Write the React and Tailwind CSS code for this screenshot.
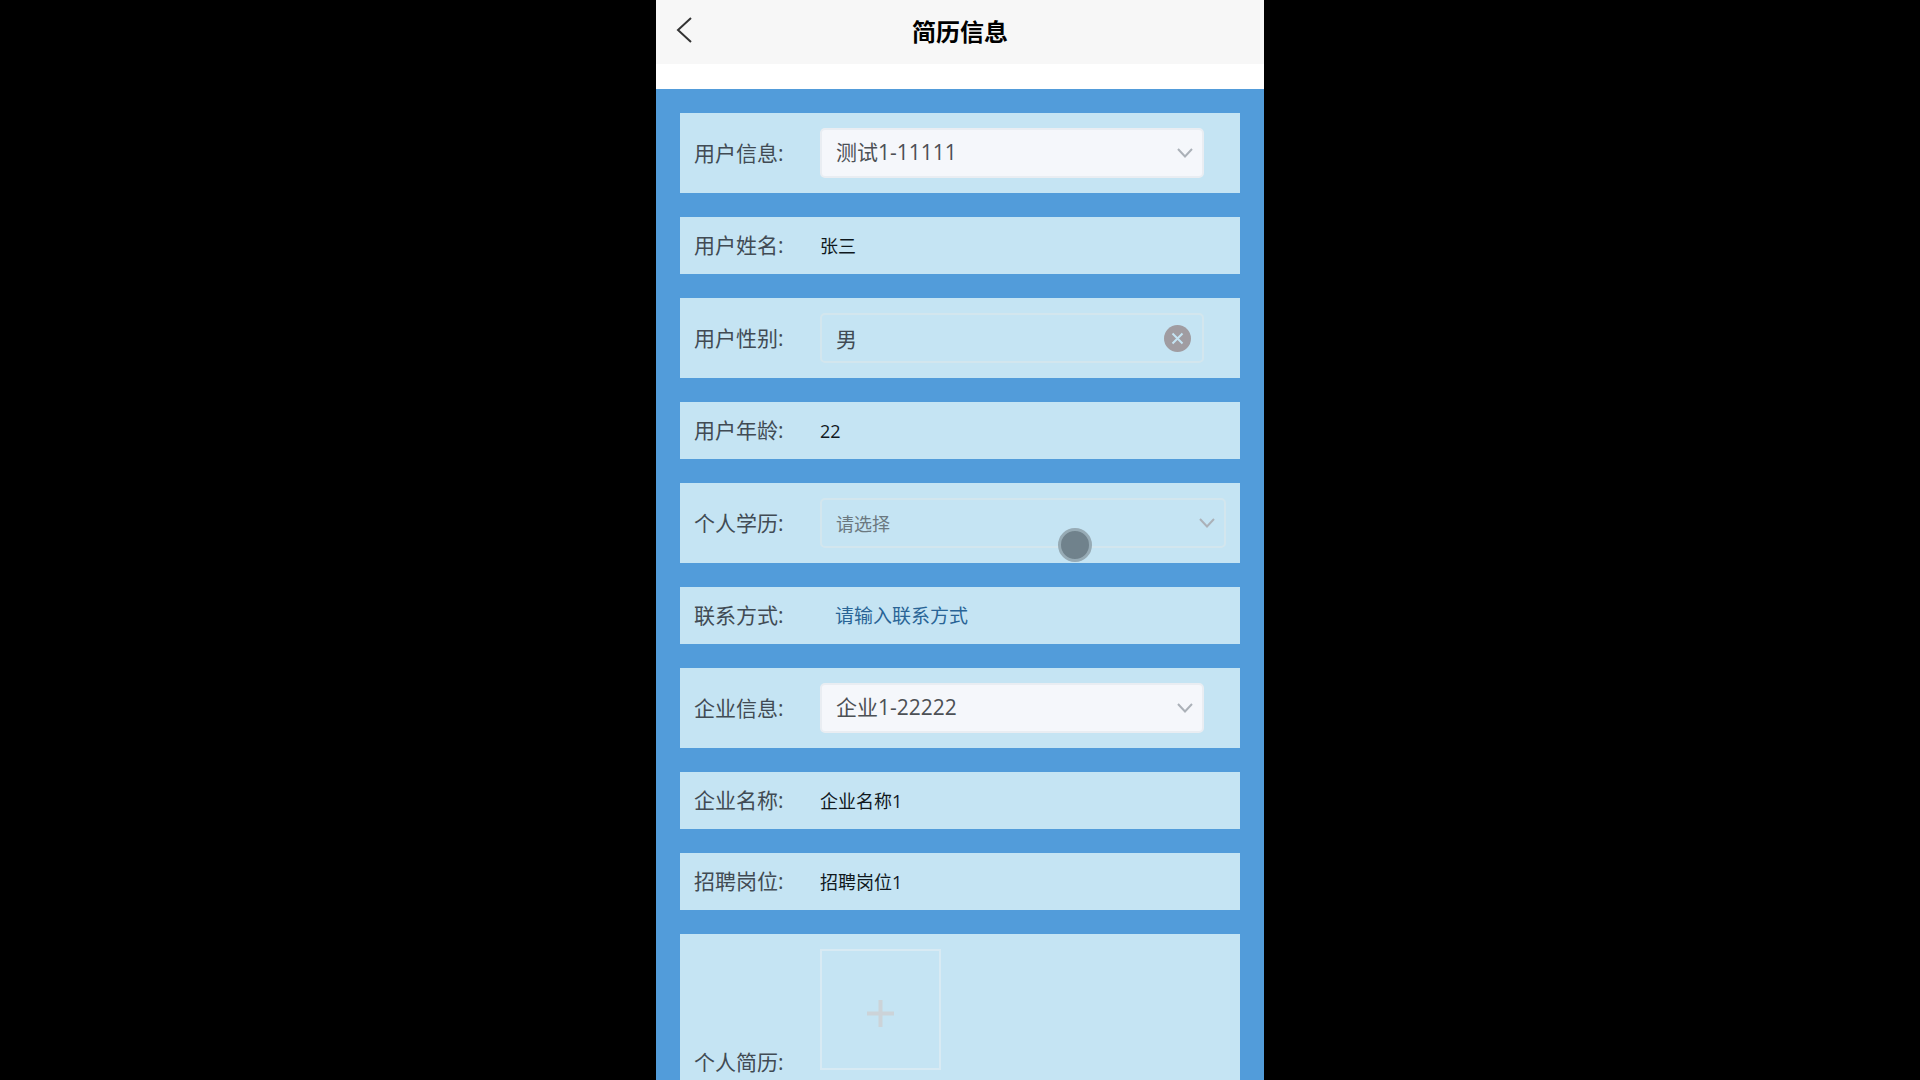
import { useState } from 'react';
import { clsx } from 'clsx';

const fieldBox = 'relative flex h-[50px] flex-1 items-center rounded-[5px] border-2';

function Row({ id, label, children, alignEnd }) {
  return (
    <div className={clsx('flex bg-[#c5e4f3] px-[14px] py-[15px]', alignEnd ? 'items-end' : 'items-center')}>
      <label htmlFor={id} className="w-[126px] shrink-0 text-[21px] leading-[27px] text-[#414b54]">
        {label}:
      </label>
      {children}
    </div>
  );
}

function Chevron() {
  return (
    <svg
      viewBox="0 0 16 10"
      className="pointer-events-none absolute right-[9px] h-[10px] w-4 fill-none stroke-[#abb1b8] stroke-2"
    >
      <path d="M1 1l7 7.5L15 1" />
    </svg>
  );
}

function SelectField({ id, options, disabled, full }) {
  return (
    <div
      className={clsx(
        fieldBox,
        disabled ? 'border-[#e9edf2] bg-[#f5f7fb]' : 'border-[#d3e6ee]',
        !full && 'mr-[22px]'
      )}
    >
      <select
        id={id}
        disabled={disabled}
        className={clsx(
          'h-full w-full appearance-none bg-transparent px-[14px] opacity-100 outline-none',
          disabled ? 'text-[21px] text-[#4c5055]' : 'pt-[2px] text-[18px] text-[#6b7880]'
        )}
      >
        {options.map((o) => (
          <option key={o}>{o}</option>
        ))}
      </select>
      <Chevron />
    </div>
  );
}

function TextField({ id, value }) {
  return (
    <input
      id={id}
      defaultValue={value}
      className="h-[27px] min-w-0 flex-1 bg-transparent pt-[2px] text-[18px] text-[#10181d] outline-none"
    />
  );
}

function GenderField() {
  const [gender, setGender] = useState('男');

  return (
    <div className={clsx(fieldBox, 'mr-[22px] border-[#d3e6ee]')}>
      <input
        id="gender"
        value={gender}
        onChange={(e) => setGender(e.target.value)}
        className="h-full min-w-0 flex-1 bg-transparent px-[14px] text-[21px] text-[#414b54] outline-none"
      />
      {gender && (
        <button type="button" aria-label="清除" className="mr-[11px]" onClick={() => setGender('')}>
          <svg viewBox="0 0 27 27" className="h-[27px] w-[27px]">
            <circle cx="13.5" cy="13.5" r="13.5" fill="#a09ca1" />
            <path d="M8.5 8.5l10 10M18.5 8.5l-10 10" stroke="#c5e4f3" strokeWidth="2" fill="none" />
          </svg>
        </button>
      )}
    </div>
  );
}

export default function App() {
  return (
    <div className="h-screen overflow-hidden bg-black font-['Open_Sans','Noto_Sans_CJK_SC',sans-serif]">
      <main className="relative mx-auto min-h-full w-full max-w-[608px] bg-white">
        <header className="grid h-16 grid-cols-[64px_1fr_64px] items-center bg-[#f7f7f7]">
          <button type="button" aria-label="返回" className="flex pb-1 pl-5">
            <svg viewBox="0 0 16 26" className="h-[26px] w-4 fill-none stroke-[#333] stroke-2">
              <path d="M15 1L2 13l13 12" />
            </svg>
          </button>
          <h1 className="text-center text-[24px] font-bold leading-8 text-black">简历信息</h1>
        </header>

        <form className="mt-[25px] flex flex-col gap-6 bg-[#529cda] p-6">
          <Row id="user" label="用户信息">
            <SelectField id="user" options={['测试1-11111']} disabled />
          </Row>
          <Row id="name" label="用户姓名">
            <TextField id="name" value="张三" />
          </Row>
          <Row id="gender" label="用户性别">
            <GenderField />
          </Row>
          <Row id="age" label="用户年龄">
            <TextField id="age" value="22" />
          </Row>
          <Row id="education" label="个人学历">
            <SelectField id="education" options={['请选择']} full />
          </Row>
          <Row id="contact" label="联系方式">
            <input
              id="contact"
              placeholder="请输入联系方式"
              className="h-[27px] min-w-0 flex-1 bg-transparent px-[15px] pt-[2px] text-[19px] text-[#10181d] outline-none placeholder:text-[#296496]"
            />
          </Row>
          <Row id="company" label="企业信息">
            <SelectField id="company" options={['企业1-22222']} disabled />
          </Row>
          <Row id="companyName" label="企业名称">
            <TextField id="companyName" value="企业名称1" />
          </Row>
          <Row id="position" label="招聘岗位">
            <TextField id="position" value="招聘岗位1" />
          </Row>
          <Row id="resume" label="个人简历" alignEnd>
            <button
              id="resume"
              type="button"
              aria-label="上传个人简历"
              className="mb-[6px] flex h-[121px] w-[121px] items-center justify-center border-2 border-[#d8eaf3] pt-2"
            >
              <svg viewBox="0 0 27 27" className="h-[27px] w-[27px] stroke-[#ccd3d8] stroke-[4]">
                <path d="M13.5 0v27M0 13.5h27" />
              </svg>
            </button>
          </Row>
        </form>

        {/* touch pointer */}
        <div className="pointer-events-none absolute left-[402px] top-[528px] h-[34px] w-[34px] rounded-full border-3 border-[#97abb5] bg-[#70828c]" />
      </main>
    </div>
  );
}
